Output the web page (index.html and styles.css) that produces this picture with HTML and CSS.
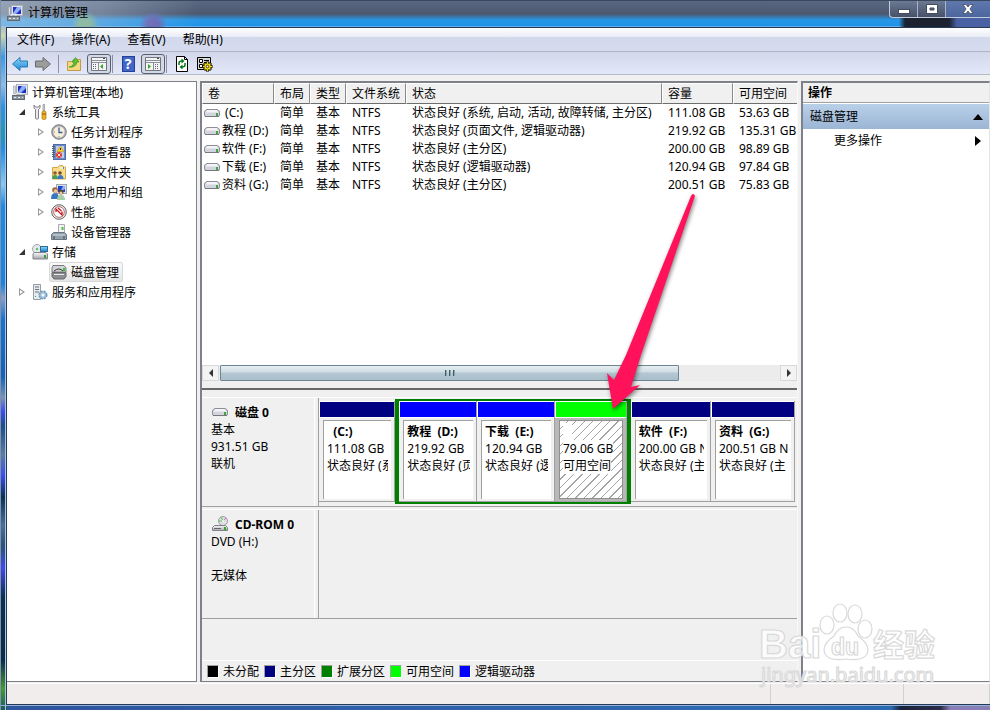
FILE: index.html
```html
<!DOCTYPE html>
<html lang="zh-CN">

<head>
    <meta charset="UTF-8" />
    <meta name="viewport" content="width=device-width, initial-scale=1.0" />
    <title>计算机管理</title>
    <link rel="stylesheet" href="styles.css">
</head>

<body>
    <svg class="defs" aria-hidden="true">
        <linearGradient id="metal" x1="0" y1="0" x2="0" y2="1">
            <stop offset="0" stop-color="#fafafc" />
            <stop offset="1" stop-color="#a4a4ae" />
        </linearGradient>
        <linearGradient id="blue" x1="0" y1="0" x2="0" y2="1">
            <stop offset="0" stop-color="#8fd6fa" />
            <stop offset="1" stop-color="#1c86d0" />
        </linearGradient>
        <symbol id="drive" viewBox="0 0 16 16">
            <path d="M3 4.500h10q2.500 1 2.500 2.500v3q0 1.500-1.500 1.500H2Q.5 11.500.5 10V7Q.5 5.500 3 4.500z" fill="#d4d4de" stroke="#8e8e98" />
            <path d="M3.500 5h9l2 2.500h-13z" fill="#f4f4f8" />
            <path d="M1 11.500h14" stroke="#77777f" />
            <rect x="12" y="8" width="2" height="3" fill="#3fa53f" />
        </symbol>
        <symbol id="computer" viewBox="0 0 16 16">
            <rect x="4.500" y=".5" width="11" height="10" fill="#e4e4ea" stroke="#b0b0b8" />
            <rect x="6" y="2" width="8" height="7" fill="#1b2fc4" />
            <path d="M6 8L10 2h4v2l-5 5H6z" fill="#8fb0f4" />
            <path d="M1.500 2h2v8h-2z" fill="#d9dbe2" stroke="#9b9ea8" stroke-width=".6" />
            <rect x=".5" y="11.500" width="12" height="4" fill="#8a949c" stroke="#606a72" />
            <path d="M4 11V9.500h5V11M2 13.500h2m2 0h2m2 0h1" stroke="#e6ecf0" fill="none" />
        </symbol>
        <symbol id="tools" viewBox="0 0 16 16">
            <path d="M2 1v3l1.500 1.500v9q1.500 1.500 3 0v-9L8 4V1L6.500 3h-3z" fill="#e9e9ec" stroke="#85858a" />
            <path d="M11 .5h1.500v6H11z" fill="#ddd" stroke="#888" stroke-width=".7" />
            <rect x="10" y="7" width="4" height="8.500" rx="1.500" fill="#f2b01e" stroke="#a8740c" stroke-width=".7" />
            <path d="M10 10h4" stroke="#8a5c08" />
        </symbol>
        <symbol id="clock" viewBox="0 0 16 16">
            <circle cx="8" cy="8" r="7.300" fill="#a9abb4" stroke="#7c808a" />
            <circle cx="8" cy="8" r="5.600" fill="#f7f0d8" />
            <path d="M8 3.500v5h3.500" fill="none" stroke="#3a5d9c" stroke-width="1.300" />
            <path d="M8 13v-1M3 8h1" stroke="#c08a2a" />
        </symbol>
        <symbol id="event" viewBox="0 0 16 16">
            <rect x="2.500" y=".5" width="12" height="15" fill="#6d8cc9" stroke="#4f6da8" />
            <path d="M5 2h8v12H5z" fill="#b9ccec" />
            <path d="M1 2.500h3m-3 2h3m-3 2h3m-3 2h3m-3 2h3m-3 2h3" stroke="#5a616e" />
            <path d="M9.500 2l3.500 5.500H6z" fill="#ffd21c" stroke="#c48d00" stroke-width=".5" />
            <path d="M9.500 4v2" stroke="#222" />
            <circle cx="8" cy="11" r="3" fill="#e03a2e" />
            <path d="M6.500 9.500l3 3m0-3l-3 3" stroke="#fff" stroke-width=".8" />
        </symbol>
        <symbol id="folder" viewBox="0 0 16 16">
            <path d="M1.500 3.500h5l2-2h3l1 1.500h2v12h-13z" fill="#f8dc88" stroke="#cfa84c" />
            <path d="M9 4h5" stroke="#fff8dc" />
            <path d="M12 3h1v2h-1z" fill="#3c90d8" />
            <circle cx="4" cy="9" r="1.800" fill="#8a5a34" />
            <circle cx="9" cy="9" r="1.800" fill="#6c4a2c" />
            <path d="M1 15q0-4 3-4t3 4z" fill="#4d9c54" />
            <path d="M6.500 15q0-4 3-4t3 4z" fill="#3b78c8" />
        </symbol>
        <symbol id="users" viewBox="0 0 16 16">
            <rect x="5.500" y=".5" width="10" height="9" fill="#dcdfe8" stroke="#a0a6b2" />
            <rect x="7" y="2" width="7" height="6" fill="#1f43cc" />
            <path d="M9 8l3-6h2v3z" fill="#8fb0f4" />
            <circle cx="4" cy="6" r="2.800" fill="#9a6a3c" />
            <circle cx="4.500" cy="7" r="1.800" fill="#efc79a" />
            <circle cx="10" cy="8" r="2.500" fill="#5b4636" />
            <circle cx="10" cy="9" r="1.600" fill="#efc79a" />
            <path d="M0 15q0-6 4-6t4 6z" fill="#3c77bd" />
            <path d="M6 16q0-5 4-5t4 5z" fill="#a8cfa8" />
        </symbol>
        <symbol id="perf" viewBox="0 0 16 16">
            <circle cx="8" cy="8" r="7.300" fill="#e4e4e4" stroke="#686868" />
            <circle cx="8" cy="8" r="5.300" fill="#fff" stroke="#aa5454" stroke-width=".8" />
            <path d="M5 8V5l6 6V7.500M7 4l3.500 3" fill="none" stroke="#c8151b" stroke-width="1.300" />
        </symbol>
        <symbol id="device" viewBox="0 0 16 16">
            <path d="M7.500.5h6v8h-6z" fill="#f4f4f4" stroke="#aaa" />
            <path d="M11.500 3v3" stroke="#54b848" stroke-width="2" />
            <path d="M2.500 8.500h11l2 2v5H.5v-5z" fill="#90a0ac" stroke="#687680" />
            <path d="M2 11h12" stroke="#d6e0e8" />
            <path d="M3 12v3m10-3v3" stroke="#3c4850" />
        </symbol>
        <symbol id="storage" viewBox="0 0 16 16">
            <circle cx="5" cy="5" r="4.500" fill="#e6e9ec" stroke="#a0a5aa" />
            <circle cx="5" cy="5" r="1.300" fill="#6cc46c" />
            <rect x="8.500" y="2.500" width="7" height="5" fill="url(#blue)" stroke="#2c6b94" />
            <path d="M2 8.500h12l1.500 1.500v5H1v-5z" fill="url(#metal)" stroke="#84848c" />
            <rect x="12" y="11" width="2" height="3" fill="#2fa52f" />
        </symbol>
        <symbol id="diskmgmt" viewBox="0 0 16 16">
            <path d="M2 1.500h11l2 2.500v4H1V4z" fill="#d4d4d8" stroke="#7a7a7e" />
            <path d="M3 7q5-4 9 0" stroke="#333" fill="none" />
            <rect x="12" y="4" width="2" height="3" fill="#2fc52f" />
            <path d="M1 8.500h14v4l-2 2.500H3l-2-2.500z" fill="#8b8d92" stroke="#66686c" />
            <path d="M3 10.500h10" stroke="#e8e8ec" />
        </symbol>
        <symbol id="services" viewBox="0 0 16 16">
            <path d="M1.500.5h7v15h-7z" fill="#e6eaee" stroke="#959ca4" />
            <path d="M3 3h4M3 5.500h4M3 8h4" stroke="#6b737c" />
            <path d="M3 12h1v1H3z" fill="#3fb53f" />
            <circle cx="11" cy="11" r="3.800" fill="#9fc0dc" stroke="#6d98bc" stroke-dasharray="2 1" stroke-width="1.500" />
            <circle cx="11" cy="11" r="1.500" fill="#fff" />
        </symbol>
        <symbol id="cdrom" viewBox="0 0 16 16">
            <circle cx="11" cy="5" r="4.500" fill="#e0e0e4" stroke="#9c9ca2" />
            <path d="M11 5L9 1M11 5L7 5" stroke="#4fc84f" />
            <path d="M11 5l3-3" stroke="#d868c8" />
            <circle cx="11" cy="5" r="1" fill="#fff" />
            <path d="M2.500 9.500h11l2 2v3h-15v-3z" fill="url(#metal)" stroke="#81818a" />
            <path d="M2 12.500h7" stroke="#65656c" />
            <rect x="12" y="11" width="2" height="3" fill="#2fa52f" />
        </symbol>
    </svg>

    <div class="window">
        <header class="title-bar">
            <svg class="icon"><use href="#computer" /></svg>
            <h1>计算机管理</h1>
            <div class="window-buttons">
                <button type="button" aria-label="最小化"><svg width="12" height="12"><rect x=".5" y="6.500" width="11" height="4" fill="#fff" stroke="#444b5c" /></svg></button>
                <button type="button" aria-label="最大化"><svg width="12" height="12"><path d="M.5 1.500h11v9H.5zM4 5h4v2H4z" fill="#fff" fill-rule="evenodd" stroke="#444b5c" /></svg></button>
                <button type="button" class="close" aria-label="关闭"><svg width="12" height="12"><path d="M1 1.500h3l2 2.500 2-2.500h3L8 6l3 4.500H8L6 8l-2 2.500H1L4 6z" fill="#fff" stroke="#444b5c" stroke-width=".8" /></svg></button>
            </div>
        </header>

        <div class="client">
            <nav class="menu-bar">
                <button type="button">文件(F)</button>
                <button type="button">操作(A)</button>
                <button type="button">查看(V)</button>
                <button type="button">帮助(H)</button>
            </nav>

            <div class="toolbar">
                <button type="button" aria-label="后退"><svg class="icon"><path d="M.5 8L8 1.500v3.500h7.500v6H8v3.500z" fill="url(#blue)" stroke="#2878b4" /></svg></button>
                <button type="button" aria-label="前进"><svg class="icon"><path d="M15.500 8L8 1.500v3.500H.5v6H8v3.500z" fill="#9c9c9c" stroke="#6c6c6c" /></svg></button>
                <i class="separator"></i>
                <button type="button" aria-label="向上"><svg class="icon"><path d="M1.500 5.500h5l1-2h7v11h-13z" fill="#f5d982" stroke="#c49a44" /><path d="M3 11q4 0 5-5H6l3.500-4.500L13 6h-2q-1 6-8 5z" fill="#54c434" stroke="#2e8a1c" stroke-width=".6" /></svg></button>
                <button type="button" class="pressed" aria-label="控制台树"><svg class="icon"><path d="M.5 1.500h15v13H.5z" fill="#f4f4f4" stroke="#70757f" /><path d="M1 4.500h14M1 6.500h14M7.500 7v7" stroke="#8a8f99" /><path d="M12 2.500h2" stroke="#444" /><path d="M2 8.500h4m-4 2h4m-4 2h4" stroke="#606878" stroke-dasharray="1 1" /><path d="M9 10.500l3-2.500v5z" fill="#35a52b" /></svg></button>
                <i class="separator"></i>
                <button type="button" class="help" aria-label="帮助"><span>?</span></button>
                <button type="button" class="pressed" aria-label="操作窗格"><svg class="icon"><path d="M.5 1.500h15v13H.5z" fill="#f4f4f4" stroke="#70757f" /><path d="M1 4.500h14M1 6.500h14M8.500 7v7" stroke="#8a8f99" /><path d="M12 2.500h2" stroke="#444" /><path d="M10 8.500h4m-4 2h4m-4 2h4" stroke="#606878" stroke-dasharray="1 1" /><path d="M6 10.500L3 8v5z" fill="#35a52b" /></svg></button>
                <i class="separator"></i>
                <button type="button" aria-label="刷新"><svg class="icon"><path d="M2.500.5h8l3 3v12h-11z" fill="#fff" stroke="#000" /><path d="M10.500.5v3h3" fill="none" stroke="#000" /><path d="M5 9V7q0-2 3-2M11 7v2q0 2-3 2" fill="none" stroke="#067a16" stroke-width="1.500" /><path d="M7.500 2.500l3 2.500-3 2.500zM8.500 8.500l-3 2.500 3 2.500z" fill="#067a16" /></svg></button>
                <button type="button" aria-label="设置"><svg class="icon"><path d="M.5 1.500h13v12H.5z" fill="#d8d8d8" stroke="#000" /><path d="M2.500 3.500h3v3h-3zM2.500 8.500h3v3h-3z" fill="#fff" stroke="#000" /><path d="M7 4.500h5M7 6.500h3" stroke="#000" /><path d="M10.500 5.500v10M5.500 10.500h10M7 7l7 7M14 7l-7 7" stroke="#000" stroke-width="3" /><path d="M10.500 6v9M6 10.500h9M7.500 7.500l6 6M13.500 7.500l-6 6" stroke="#f3d916" stroke-width="1.500" /><circle cx="10.500" cy="10.500" r="3" fill="#f3d916" /><circle cx="10.500" cy="10.500" r="1.300" fill="#fff" stroke="#000" stroke-width=".7" /></svg></button>
            </div>

            <main class="panes">
                <aside class="tree">
                    <ul>
                        <li class="root"><svg class="icon"><use href="#computer" /></svg><a href="#">计算机管理(本地)</a></li>
                        <li class="level-1"><i class="open"></i><svg class="icon"><use href="#tools" /></svg><a href="#">系统工具</a></li>
                        <li class="level-2"><i class="closed"></i><svg class="icon"><use href="#clock" /></svg><a href="#">任务计划程序</a></li>
                        <li class="level-2"><i class="closed"></i><svg class="icon"><use href="#event" /></svg><a href="#">事件查看器</a></li>
                        <li class="level-2"><i class="closed"></i><svg class="icon"><use href="#folder" /></svg><a href="#">共享文件夹</a></li>
                        <li class="level-2"><i class="closed"></i><svg class="icon"><use href="#users" /></svg><a href="#">本地用户和组</a></li>
                        <li class="level-2"><i class="closed"></i><svg class="icon"><use href="#perf" /></svg><a href="#">性能</a></li>
                        <li class="level-2"><i></i><svg class="icon"><use href="#device" /></svg><a href="#">设备管理器</a></li>
                        <li class="level-1"><i class="open"></i><svg class="icon"><use href="#storage" /></svg><a href="#">存储</a></li>
                        <li class="level-2"><i></i><span class="selected"><svg class="icon"><use href="#diskmgmt" /></svg><a href="#">磁盘管理</a></span></li>
                        <li class="level-1"><i class="closed"></i><svg class="icon"><use href="#services" /></svg><a href="#">服务和应用程序</a></li>
                    </ul>
                </aside>

                <section class="center">
                    <div class="volumes">
                        <table>
                            <colgroup>
                                <col class="col-volume">
                                <col class="col-layout">
                                <col class="col-type">
                                <col class="col-fs">
                                <col class="col-status">
                                <col class="col-size">
                                <col class="col-free">
                            </colgroup>
                            <thead>
                                <tr><th>卷</th><th>布局</th><th>类型</th><th>文件系统</th><th>状态</th><th>容量</th><th>可用空间</th></tr>
                            </thead>
                            <tbody>
                                <tr><td><svg class="icon"><use href="#drive" /></svg><span> (C:)</span></td><td>简单</td><td>基本</td><td>NTFS</td><td>状态良好 (系统, 启动, 活动, 故障转储, 主分区)</td><td>111.08 GB</td><td>53.63 GB</td></tr>
                                <tr><td><svg class="icon"><use href="#drive" /></svg><span>教程 (D:)</span></td><td>简单</td><td>基本</td><td>NTFS</td><td>状态良好 (页面文件, 逻辑驱动器)</td><td>219.92 GB</td><td>135.31 GB</td></tr>
                                <tr><td><svg class="icon"><use href="#drive" /></svg><span>软件 (F:)</span></td><td>简单</td><td>基本</td><td>NTFS</td><td>状态良好 (主分区)</td><td>200.00 GB</td><td>98.89 GB</td></tr>
                                <tr><td><svg class="icon"><use href="#drive" /></svg><span>下载 (E:)</span></td><td>简单</td><td>基本</td><td>NTFS</td><td>状态良好 (逻辑驱动器)</td><td>120.94 GB</td><td>97.84 GB</td></tr>
                                <tr><td><svg class="icon"><use href="#drive" /></svg><span>资料 (G:)</span></td><td>简单</td><td>基本</td><td>NTFS</td><td>状态良好 (主分区)</td><td>200.51 GB</td><td>75.83 GB</td></tr>
                            </tbody>
                        </table>
                        <div class="scrollbar">
                            <button type="button" aria-label="向左滚动"><svg width="4" height="8"><path d="M4 0v8L0 4z" fill="#333" /></svg></button>
                            <div class="track">
                                <div class="thumb"><i></i><i></i><i></i></div>
                            </div>
                            <button type="button" aria-label="向右滚动"><svg width="4" height="8"><path d="M0 0v8l4-4z" fill="#333" /></svg></button>
                        </div>
                    </div>

                    <div class="disks">
                        <div class="disk">
                            <div class="disk-label">
                                <h2><svg class="icon"><use href="#drive" /></svg>磁盘 0</h2>
                                <p>基本</p>
                                <p>931.51 GB</p>
                                <p>联机</p>
                            </div>
                            <div class="partitions">
                                <div class="partition primary size-c">
                                    <div class="bar"></div>
                                    <div class="box"><div><h3>&nbsp; (C:)</h3><p>111.08 GB</p><p>状态良好 (系</p></div></div>
                                </div>
                                <div class="extended">
                                    <div class="partition logical size-d">
                                        <div class="bar"></div>
                                        <div class="box"><div><h3>教程&nbsp; (D:)</h3><p>219.92 GB</p><p>状态良好 (页</p></div></div>
                                    </div>
                                    <div class="partition logical size-d">
                                        <div class="bar"></div>
                                        <div class="box"><div><h3>下载&nbsp; (E:)</h3><p>120.94 GB</p><p>状态良好 (逻</p></div></div>
                                    </div>
                                    <div class="partition free size-free">
                                        <div class="bar"></div>
                                        <div class="box"><div><h3><span>&nbsp; &nbsp;</span></h3><p><span>79.06 GB</span></p><p><span>可用空间</span></p></div></div>
                                    </div>
                                </div>
                                <div class="partition primary size-f">
                                    <div class="bar"></div>
                                    <div class="box"><div><h3>软件&nbsp; (F:)</h3><p>200.00 GB N</p><p>状态良好 (主</p></div></div>
                                </div>
                                <div class="partition primary size-g">
                                    <div class="bar"></div>
                                    <div class="box"><div><h3>资料&nbsp; (G:)</h3><p>200.51 GB N</p><p>状态良好 (主</p></div></div>
                                </div>
                            </div>
                        </div>
                        <div class="disk">
                            <div class="disk-label">
                                <h2><svg class="icon"><use href="#cdrom" /></svg>CD-ROM 0</h2>
                                <p>DVD (H:)</p>
                                <p>&nbsp;</p>
                                <p>无媒体</p>
                            </div>
                            <div class="partitions"></div>
                        </div>
                        <ul class="legend">
                            <li><i class="black"></i>未分配</li>
                            <li><i class="navy"></i>主分区</li>
                            <li><i class="green"></i>扩展分区</li>
                            <li><i class="lime"></i>可用空间</li>
                            <li><i class="blue"></i>逻辑驱动器</li>
                        </ul>
                    </div>
                </section>

                <aside class="actions">
                    <h2>操作</h2>
                    <button type="button" class="group">磁盘管理<svg width="10" height="6"><path d="M0 6h10L5 0z" /></svg></button>
                    <button type="button" class="more">更多操作<svg width="6" height="10"><path d="M0 0v10l6-5z" /></svg></button>
                </aside>
            </main>

            <footer class="status-bar"><span></span><span></span><span></span></footer>
        </div>

        <svg class="arrow" width="100" height="230" viewBox="600 190 100 230">
            <path d="M691 196q2-4 4 0L641 355l-10 32 9-2-27 24-6-36 7 7 12-25z" fill="#ff1259" />
        </svg>

        <svg class="watermark" width="186" height="88" viewBox="756 600 186 88">
            <g fill="#fff" fill-opacity=".8" stroke="#d9d9d9" stroke-width="1.200">
                <ellipse cx="827" cy="625" rx="7" ry="9" />
                <ellipse cx="840" cy="613" rx="7" ry="9" />
                <ellipse cx="855" cy="614" rx="7" ry="9" />
                <ellipse cx="865" cy="629" rx="7" ry="9" />
                <path d="M846 627q8 0 12 9 10 7 10 14-1 12-22 9-21 3-22-9 0-7 10-14 4-9 12-9z" />
                <text class="mark-big" x="759" y="658">Bai</text>
                <text class="mark-du" x="831" y="655">du</text>
                <text class="mark-cn" x="873" y="656">经验</text>
                <text class="mark-url" x="761" y="682">jingyan.baidu.com</text>
            </g>
        </svg>
    </div>
</body>

</html>
```
FILE: styles.css
```css
* {
    box-sizing: border-box;
}

body {
    margin: 0;
    height: 100vh;
    overflow: hidden;
    font-family: "Noto Sans", "Noto Sans CJK SC", sans-serif;
    font-size: 12px;
    line-height: 17px;
    color: #000;
}

h1,
h2,
h3,
p,
ul {
    margin: 0;
    padding: 0;
    font-size: 12px;
}

ul {
    list-style: none;
}

button {
    padding: 0;
    border: none;
    background: none;
    font: inherit;
    color: inherit;
}

a {
    color: inherit;
    text-decoration: none;
}

svg {
    flex: none;
}

.defs {
    position: absolute;
    width: 0;
    height: 0;
}

.icon {
    width: 16px;
    height: 16px;
}

/* Window frame */

.window {
    position: relative;
    display: flex;
    flex-direction: column;
    height: 100%;
    padding: 0 0 5px 5px;
    background:
        linear-gradient(90deg, transparent 4px, #a9c4de 4px, #a9c4de 5px, transparent 5px),
        linear-gradient(0deg, transparent 4px, #8fb0dc 4px, #8fb0dc 5px, transparent 5px),
        linear-gradient(90deg, transparent 6px, #2f559c 6px, #2f6cb4 80%, #2a6ab0 90%, #1c2238 91%, #2c2c48 95%, #8a7fb4 96%) 0 100% / 100% 5px no-repeat,
        linear-gradient(180deg, #a8b8cc 0, #8fb4d0 3%, #cfd6a8 5%, #3a9ae8 8%, #8abce8 12%, #2a94e8 15%, #1c9ab8 19%, #2090e8 21%, #86c8f4 26%, #1a8ce8 29%, #1a84e0 40%, #8a9cc8 42%, #1674d0 45%, #1260b8 53%, #7a94b8 56%, #3c4cf0 58%, #1c4c88 60%, #5c7ca4 64%, #3c4cf0 67%, #0c3054 70%, #4a7098 74%, #2c5078 77%, #4048f0 80%, #0c3050 84%, #0a2c48 93%, #4a9a30 97%, #1c5a60 100%);
    border-left: 1px solid #7f93ac;
}

.title-bar {
    display: flex;
    align-items: flex-start;
    height: 27px;
    margin-left: -5px;
    padding-left: 6px;
    border-top: 1px solid #39465c;
    background:
        linear-gradient(90deg, rgba(200, 212, 226, 0.55), rgba(180, 198, 220, 0.4) 100px, transparent 200px),
        radial-gradient(circle at 84px 24px, #6fae7c 6px, transparent 14px),
        radial-gradient(circle at 152px 24px, #5e5cb0 6px, transparent 14px),
        radial-gradient(ellipse at 225px 26px, #2a6aa4 8px, transparent 15px),
        linear-gradient(90deg, transparent 898px, #1c2230 904px, #1c2230 948px, #4a62a4 956px) 0 100% / 100% 10px no-repeat,
        linear-gradient(180deg, #5a6780 0, #4c5870 13px, #2797e6 19px, #1c93ea 25px, #a9c9ea 26px);
}

.title-bar .icon {
    margin-top: 4px;
}

.title-bar h1 {
    margin: 3px 0 0 5px;
    font-weight: normal;
}

.window-buttons {
    display: flex;
    margin-left: auto;
    height: 17px;
    border: 1px solid #c2cadb;
    border-width: 0 0 1px 1px;
    border-radius: 0 0 0 4px;
    background: linear-gradient(180deg, #6c7993, #465168);
}

.window-buttons button {
    display: flex;
    justify-content: center;
    align-items: center;
    width: 28px;
    border-right: 1px solid #aab3c6;
}

.window-buttons .close {
    width: 44px;
    border-right: none;
    background: linear-gradient(180deg, #5f78ac, #4c679f);
}

.client {
    display: flex;
    flex: 1;
    flex-direction: column;
    min-height: 0;
    border: 1px solid #263a55;
    border-right: none;
    background: #f0f0f0;
}

/* Menu and toolbar */

.menu-bar {
    display: flex;
    gap: 17px;
    height: 24px;
    padding-left: 10px;
    border-bottom: 1px solid #aeb3c6;
    background: linear-gradient(180deg, #fff, #e8ecf5 9px, #d3d9ec 9px, #d6dcee);
}

.toolbar {
    display: flex;
    align-items: center;
    gap: 3px;
    height: 23px;
    padding: 1px 0 0 3px;
    border-bottom: 1px solid #b4b9ca;
    background: linear-gradient(180deg, #d2d8ea, #e2e8f8);
}

.toolbar button {
    display: flex;
    justify-content: center;
    align-items: center;
    width: 20px;
}

.toolbar .pressed {
    width: 24px;
    height: 20px;
    border: 1px solid #5a6070;
    border-radius: 3px;
    background: #d4d8e4;
}

.toolbar .separator {
    width: 1px;
    height: 18px;
    margin: 0 2px;
    background: #8b91a3;
}

.toolbar .pressed + .separator {
    margin-left: -2px;
}

.toolbar .help span {
    width: 13px;
    height: 16px;
    border: 1px solid #263f94;
    background: #3f66c8;
    color: #fff;
    font-size: 14px;
    font-weight: bold;
    line-height: 14px;
}

/* Panes */

.panes {
    display: grid;
    flex: 1;
    grid-template-columns: 190px minmax(0, 1fr) 189px;
    gap: 3px;
    min-height: 0;
    padding-top: 6px;
}

.tree,
.center,
.actions {
    min-width: 0;
    border: 2px solid #7e8187;
    border-width: 2px 1px 1px 2px;
    background: #fff;
}

.tree {
    border-width: 1px 1px 1px 0;
}

.center {
    border-right-color: #f8f8f8;
}

.tree ul {
    padding: 0 0 0 5px;
}

.tree li {
    display: flex;
    align-items: center;
    height: 20px;
    gap: 4px;
    white-space: nowrap;
}

.tree .level-1 {
    padding-left: 4px;
}

.tree .level-2 {
    padding-left: 23px;
}

.tree i {
    display: flex;
    justify-content: center;
    width: 12px;
}

.tree .closed::before {
    content: "";
    width: 6px;
    height: 8px;
    background: #999;
    clip-path: polygon(0 0, 100% 50%, 0 100%, 0 0, 1px 2px, 1px 6px, 4px 50%, 1px 2px);
}

.tree .open::before {
    content: "";
    width: 6px;
    height: 6px;
    background: #333;
    clip-path: polygon(100% 0, 100% 100%, 0 100%);
}

.selected {
    display: flex;
    align-items: center;
    gap: 4px;
    height: 20px;
    margin: 0 -2px;
    padding: 0 3px 0 1px;
    border: 1px solid #d9d9d9;
    border-radius: 2px;
    background: linear-gradient(180deg, #fafafa, #e5e5e5);
}

.center {
    display: flex;
    flex-direction: column;
    background: #f0f0f0;
}

.volumes {
    display: flex;
    flex: 1;
    flex-direction: column;
    justify-content: space-between;
    min-height: 0;
    padding-bottom: 7px;
    border-bottom: 2px solid #696969;
    background: linear-gradient(0deg, #f0f0f0 7px, #fff 7px);
}

table {
    width: 100%;
    table-layout: fixed;
    border-collapse: separate;
    border-spacing: 0;
}

th {
    height: 21px;
    padding: 0 0 0 5px;
    border: 1px solid #fff;
    border-right-color: #8a8a8a;
    border-bottom-color: #6e6e6e;
    background: #f0f0f0;
    font-weight: normal;
    text-align: left;
    overflow: hidden;
    white-space: nowrap;
}

th:last-child {
    border-right: none;
}

td {
    height: 18px;
    padding: 0 0 0 6px;
    line-height: 18px;
    white-space: nowrap;
    overflow: hidden;
}

td:first-child {
    display: flex;
    align-items: center;
    gap: 2px;
    padding-left: 2px;
    white-space: pre;
}

.col-volume {
    width: 72px;
}

.col-layout,
.col-type {
    width: 36px;
}

.col-fs {
    width: 60px;
}

.col-status {
    width: 256px;
}

.col-size {
    width: 71px;
}

.scrollbar {
    display: flex;
    height: 16px;
    background: #ececec;
}

.scrollbar button {
    display: flex;
    justify-content: center;
    align-items: center;
    width: 17px;
    border: 1px solid #d8d8d8;
    background: #f3f3f3;
}

.track {
    flex: 1;
    padding: 0 0 0 1px;
}

.thumb {
    display: flex;
    justify-content: center;
    align-items: center;
    gap: 2px;
    width: 82%;
    height: 16px;
    border: 1px solid #6f8591;
    border-radius: 1px;
    background: linear-gradient(180deg, #e6eef2, #d0dde4 6px, #b4c8d2 7px, #a9bfca);
}

.thumb i {
    width: 2px;
    height: 6px;
    background: linear-gradient(90deg, #3c5a68 1px, #8fa5b0 1px);
}

/* Disk view */

.disks {
    padding-top: 7px;
}

.disk {
    display: flex;
    height: 110px;
    margin-bottom: 2px;
    border-top: 1px solid #fff;
}

.disk-label {
    width: 117px;
    padding: 6px 0 0 9px;
    border-right: 1px solid #a0a0a0;
    border-bottom: 1px solid #a0a0a0;
    box-shadow: inset -3px 0 #f0f0f0, inset -4px 0 #fff;
}

.disk-label h2 {
    display: flex;
    gap: 7px;
    height: 17px;
}

.disk-label .icon {
    margin-left: 1px;
}

.partitions {
    display: flex;
    flex: 1;
    min-width: 0;
    align-items: flex-start;
    padding: 1px 2px 0 0;
    border-bottom: 1px solid #a0a0a0;
}

.partition {
    display: flex;
    flex-direction: column;
    min-width: 0;
    height: 101px;
    border: 1px solid #a0a0a0;
    border-width: 0 1px 1px 0;
}

.partitions > .partition {
    margin-top: 2px;
}

.extended {
    display: flex;
    flex: 233;
    min-width: 0;
    border: 4px solid #008000;
    border-width: 2px 4px;
}

.size-c {
    flex: 77;
}

.size-d {
    flex: 77;
}

.size-free {
    flex: 71;
}

.size-f {
    flex: 81;
}

.size-g {
    flex: 85;
}

.bar {
    height: 17px;
    border: 1px solid #fff;
    border-width: 1px 0 1px 1px;
}

.primary .bar {
    background: #000080;
}

.logical .bar {
    background: #0000ff;
}

.free .bar {
    background: #00ff00;
}

.box {
    flex: 1;
    margin: 2px 3px 2px 4px;
    padding: 2px 3px;
    border: 1px solid #a0a0a0;
    border-width: 1px 0 0 1px;
    background: #fff;
}

.box div {
    overflow: hidden;
    white-space: nowrap;
}

.free {
    background: #b8b8b8;
}

.free .box {
    border: 1px solid #909090;
    background: repeating-linear-gradient(135deg, #fff 0, #fff 5px, #a4a4a4 5px, #a4a4a4 6px);
}

.free span {
    background: #fff;
}

.legend {
    display: flex;
    gap: 5px;
    margin-top: 41px;
    padding: 2px 5px 1px;
    border-top: 1px solid #fff;
    white-space: nowrap;
}

.legend li {
    display: flex;
    align-items: center;
    gap: 4px;
}

.legend i {
    width: 12px;
    height: 13px;
    border: 1px solid #a0a0a0;
    border-right-color: #fff;
    border-bottom-color: #fff;
}

.black {
    background: #000;
}

.navy {
    background: #000080;
}

.green {
    background: #008000;
}

.lime {
    background: #00ff00;
}

.legend .blue {
    background: #0000ff;
}

/* Actions */

.actions {
    display: flex;
    flex-direction: column;
    border-right-color: #e4e4e4;
}

.actions h2 {
    height: 20px;
    padding-left: 5px;
    border-bottom: 1px solid #a0a0a0;
    background: #f0f0f0;
    line-height: 20px;
}

.actions button {
    display: flex;
    justify-content: space-between;
    align-items: center;
}

.actions .group {
    height: 25px;
    margin-top: 1px;
    padding: 0 6px 0 7px;
    background: linear-gradient(180deg, #b9d0e8, #9bb5d5);
}

.actions .more {
    height: 23px;
    padding: 0 8px 0 31px;
}

.status-bar {
    display: flex;
    height: 21px;
    margin-top: 1px;
    border-top: 1px solid #fff;
    background: #f0edec;
}

.status-bar span {
    width: 133px;
    border-right: 1px solid #d2d0d0;
}

.status-bar span:first-child {
    flex: 1;
}

.status-bar span:last-child {
    width: 86px;
}

/* Overlays */

.arrow {
    position: absolute;
    left: 599px;
    top: 190px;
    filter: drop-shadow(1px 2px 2px rgba(0, 0, 0, 0.5));
}

.watermark {
    position: absolute;
    right: 48px;
    bottom: 22px;
}

.mark-big {
    font: bold 40px "Liberation Sans", sans-serif;
}

.mark-du {
    font: bold 23px "Liberation Sans", sans-serif;
}

.mark-cn {
    font: bold 31px "Noto Sans CJK SC", sans-serif;
}

.mark-url {
    font: 20px "Noto Sans", sans-serif;
}
```
